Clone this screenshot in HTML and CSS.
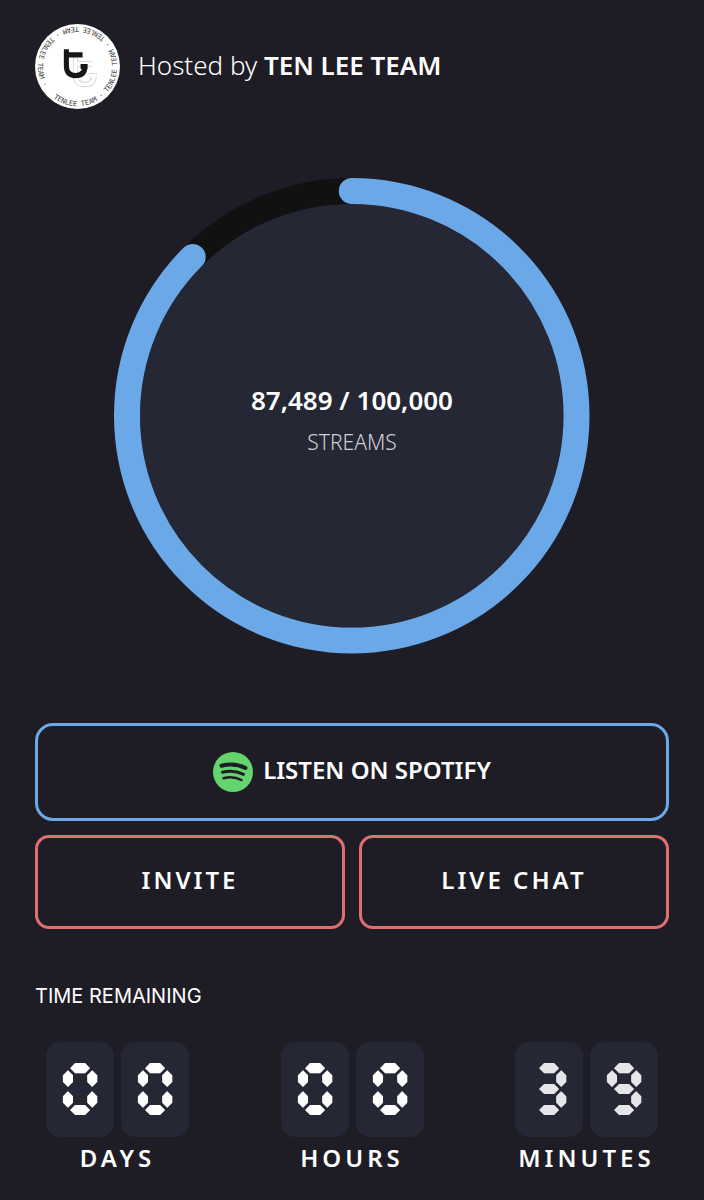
FILE: index.html
```
<!DOCTYPE html>
<html lang="en">
<head>
  <meta charset="UTF-8" />
  <meta name="viewport" content="width=device-width, initial-scale=1.0" />
  <title>Streaming Party</title>
  <link rel="stylesheet" href="styles.css">
</head>
<body>
  <main class="container">
    <header class="host">
      <svg class="avatar" viewBox="0 0 84 84" role="img" aria-label="TenLee Team logo">
        <defs>
          <path id="logoRing" d="M18 73 A39 39 0 0 0 66 11 A39 39 0 0 0 18 73" />
          <path id="logoT" d="M31 25 V41 Q31 51 40 51 Q49 51 49.500 42 M29 30.500 H47 M45 42 H52" />
        </defs>
        <circle cx="42" cy="42" r="42" fill="#fff" />
        <text class="avatar-text">
          <textPath href="#logoRing">TENLEE TEAM · TENLEE TEAM · TENLEE TEAM · TENLEE TEAM ·</textPath>
        </text>
        <g fill="none">
          <use href="#logoT" x="9" y="9" stroke="#b5b5b5" stroke-width="5" />
          <use href="#logoT" x="9" y="9" stroke="#fff" stroke-width="4" />
          <use href="#logoT" stroke="#161616" stroke-width="5" />
        </g>
      </svg>
      <p class="host-name">Hosted by <strong>TEN LEE TEAM</strong></p>
    </header>

    <section class="goal">
      <svg class="goal-ring" viewBox="0 0 476 476" aria-hidden="true">
        <circle class="ring-track" cx="238" cy="238" r="225" />
        <circle class="ring-value" cx="238" cy="238" r="225" pathLength="100000" stroke-dasharray="87489 100000" transform="rotate(-90 238 238)" />
      </svg>
      <div class="goal-label">
        <p class="goal-count">87,489 / 100,000</p>
        <p class="goal-unit">STREAMS</p>
      </div>
    </section>

    <nav class="actions">
      <a class="btn btn-listen" href="#">
        <svg class="spotify" viewBox="0 0 40 40" aria-hidden="true">
          <circle cx="20" cy="20" r="20" fill="#65d46e" />
          <g fill="none" stroke="#1e1d26" stroke-linecap="round">
            <path d="M8.500 13.800 Q21 10.500 32.500 16" stroke-width="4" />
            <path d="M9.500 20.300 Q20 17.300 30.500 22.300" stroke-width="3" />
            <path d="M10.500 26.300 Q20 23.800 28.500 28" stroke-width="2.500" />
          </g>
        </svg>
        <span class="btn-text">LISTEN ON SPOTIFY</span>
      </a>
      <div class="action-row">
        <button class="btn btn-party" type="button">INVITE</button>
        <button class="btn btn-party" type="button">LIVE CHAT</button>
      </div>
    </nav>

    <h2 class="time-title">TIME REMAINING</h2>
    <section class="timer">
      <div class="unit">
        <div class="digits"><span>&#x1FBF0;</span><span>&#x1FBF0;</span></div>
        <p class="unit-name">DAYS</p>
      </div>
      <div class="unit">
        <div class="digits"><span>&#x1FBF0;</span><span>&#x1FBF0;</span></div>
        <p class="unit-name">HOURS</p>
      </div>
      <div class="unit">
        <div class="digits digits-live"><span>&#x1FBF3;</span><span>&#x1FBF9;</span></div>
        <p class="unit-name">MINUTES</p>
      </div>
    </section>
  </main>
</body>
</html>
```
FILE: styles.css
```
* {
  box-sizing: border-box;
  margin: 0;
  padding: 0;
}

body {
  font-family: "Noto Sans", "Open Sans", sans-serif;
  background: #1e1d26;
  color: #ffffff;
}

.container {
  padding: 24px 35px;
}

/* Host */
.host {
  display: flex;
  align-items: center;
  gap: 18px;
}

.avatar {
  width: 85px;
  height: 85px;
}

.avatar-text {
  font-family: "DejaVu Sans Mono", monospace;
  font-size: 7px;
  fill: #444;
}

.host-name {
  font-size: 26px;
  font-weight: 300;
  line-height: 36px;
  padding-bottom: 4px;
}

.host-name strong {
  font-weight: 600;
}

/* Stream goal */
.goal {
  display: grid;
  place-items: center;
  width: 75%;
  margin: 69px auto;
}

.goal-ring,
.goal-label {
  grid-area: 1 / 1;
}

.goal-ring {
  display: block;
  width: 100%;
}

.goal-label {
  padding-top: 8px;
  text-align: center;
}

.ring-track {
  fill: #252734;
  stroke: #111111;
  stroke-width: 26;
}

.ring-value {
  fill: none;
  stroke: #6aa8e8;
  stroke-width: 26;
  stroke-linecap: round;
}

.goal-count {
  font-size: 26px;
  font-weight: 600;
  line-height: 44px;
}

.goal-unit {
  font-size: 21px;
  font-weight: 300;
  line-height: 40px;
  color: #d0d0d8;
}

/* Buttons */
.actions {
  display: flex;
  flex-direction: column;
  gap: 14px;
}

.action-row {
  display: grid;
  grid-template-columns: 1fr 1fr;
  gap: 14px;
}

.btn {
  display: flex;
  align-items: center;
  justify-content: center;
  font-family: inherit;
  font-size: 24px;
  font-weight: 600;
  line-height: 32px;
  color: #ffffff;
  text-decoration: none;
  background: transparent;
  border: 3px solid #e07070;
  border-radius: 14px;
  cursor: pointer;
}

.btn-listen {
  gap: 10px;
  padding: 26px 20px;
  border-color: #6aa8e8;
  border-radius: 18px;
}

.btn-text {
  padding-bottom: 4px;
}

.btn-party {
  padding: 26px 20px 30px;
  letter-spacing: 3px;
}

.spotify {
  width: 40px;
  height: 40px;
}

/* Countdown */
.time-title {
  margin-top: 51px;
  font-family: Inter, sans-serif;
  font-size: 20px;
  font-weight: 400;
  line-height: 32px;
}

.timer {
  display: flex;
  justify-content: space-between;
  padding: 30px 11px 0;
}

.unit {
  text-align: center;
}

.digits {
  display: flex;
  gap: 7px;
}

.digits span {
  width: 68px;
  height: 95px;
  background: #252734;
  border-radius: 14px;
  font-family: "Noto Sans Symbols2", "Liberation Mono", monospace;
  font-size: 72px;
  line-height: 106px;
  -webkit-text-stroke: 2px currentColor;
}

.digits-live span {
  color: #e6e6ea;
}

.unit-name {
  font-size: 24px;
  font-weight: 600;
  line-height: 42px;
  letter-spacing: 4px;
}
```
